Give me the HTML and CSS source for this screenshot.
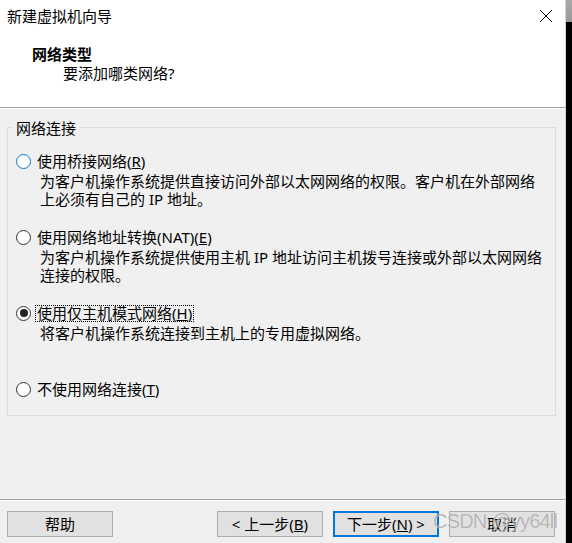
FILE: index.html
```html
<!DOCTYPE html>
<html lang="zh-CN">
<head>
<meta charset="utf-8">
<title>新建虚拟机向导</title>
<link rel="stylesheet" href="styles.css">
</head>
<body>
<div class="screen">
  <div class="window">
    <div class="header">
      <div class="titlebar">
        <span class="title">新建虚拟机向导</span>
        <svg class="close" width="14" height="14" viewBox="0 0 14 14"><path d="M1 1L13 13M13 1L1 13" stroke="#000" stroke-width="1" fill="none"/></svg>
      </div>
      <div class="heading">网络类型</div>
      <div class="subheading">要添加哪类网络?</div>
    </div>
    <div class="content">
      <fieldset class="group">
        <legend>网络连接</legend>
        <div class="option">
          <label class="opt-label"><span class="radio hover"></span><span class="opt-text">使用桥接网络(<u>R</u>)</span></label>
          <p class="desc">为客户机操作系统提供直接访问外部以太网网络的权限。客户机在外部网络<br>上必须有自己的 IP 地址。</p>
        </div>
        <div class="option">
          <label class="opt-label"><span class="radio"></span><span class="opt-text">使用网络地址转换(NAT)(<u>E</u>)</span></label>
          <p class="desc">为客户机操作系统提供使用主机 IP 地址访问主机拨号连接或外部以太网网络<br>连接的权限。</p>
        </div>
        <div class="option">
          <label class="opt-label"><span class="radio checked"></span><span class="opt-text focus">使用仅主机模式网络(<u>H</u>)</span></label>
          <p class="desc">将客户机操作系统连接到主机上的专用虚拟网络。</p>
        </div>
        <div class="option last">
          <label class="opt-label"><span class="radio"></span><span class="opt-text">不使用网络连接(<u>T</u>)</span></label>
        </div>
      </fieldset>
    </div>
    <div class="footer">
      <button class="btn help">帮助</button>
      <button class="btn">&lt; 上一步(<u>B</u>)</button>
      <button class="btn primary">下一步(<u>N</u>) &gt;</button>
      <button class="btn">取消</button>
      <span class="watermark">CSDN @yy64ll</span>
    </div>
  </div>
  <div class="edge"></div>
</div>
</body>
</html>
```

FILE: styles.css
```css
* { box-sizing: border-box; }
html, body { margin: 0; padding: 0; }
body {
  background: #000;
  font-family: "Noto Sans", "Noto Sans CJK SC", sans-serif;
  font-size: 15px;
  color: #000;
}
.screen {
  display: flex;
  width: 572px;
  height: 543px;
  overflow: hidden;
}
.window {
  width: 566px;
  height: 543px;
  border-right: 1px solid #d4d4d4;
  background: #f0f0f0;
  display: flex;
  flex-direction: column;
  position: relative;
}
.edge {
  width: 6px;
  background: linear-gradient(#a8a8a8 0, #9a9a9a 22px, #000 22px);
}

/* header */
.header {
  height: 108px;
  background: #fff;
  border-bottom: 1px solid #a0a0a0;
}
.titlebar {
  height: 32px;
  display: flex;
  align-items: center;
  justify-content: space-between;
  padding: 0 12px 0 7px;
}
.title {
  font-family: "Noto Sans CJK SC", sans-serif;
  font-size: 15px;
  line-height: 32px;
}
.close { display: block; }
.heading {
  margin-top: 12px;
  padding-left: 32px;
  font-weight: bold;
  line-height: 20px;
}
.subheading {
  padding-left: 63px;
  line-height: 19px;
}

/* content */
.content {
  height: 391px;
  border-top: 1px solid #fff;
  padding-top: 10px;
}
.group {
  margin: 0 9px 0 7px;
  padding: 14px 8px 15px 8px;
  border: 1px solid #dcdcdc;
  min-width: 0;
}
.group legend {
  padding: 0 3px;
  margin-left: -3px;
  line-height: 17px;
  font-family: "Noto Sans CJK SC", sans-serif;
}
.option { height: 76px; }
.option.last { height: auto; }
.opt-label {
  display: flex;
  align-items: center;
  height: 22px;
}
.radio {
  width: 15px;
  height: 15px;
  border: 1px solid #333;
  border-radius: 50%;
  background: #fff;
  margin-right: 6px;
  flex: none;
  display: flex;
  align-items: center;
  justify-content: center;
}
.radio.hover { border-color: #0078d7; }
.radio.checked::after {
  content: "";
  width: 8px;
  height: 8px;
  border-radius: 50%;
  background: #222;
}
.opt-text { line-height: 22px; }
.opt-text.focus {
  display: inline-block;
  line-height: 15px;
  border: 1px dotted #000;
  padding: 0 1px;
  margin-left: -2px;
}
.desc {
  margin: 0;
  padding-left: 24px;
  line-height: 18px;
  white-space: nowrap;
}

/* footer */
.footer {
  flex: 1;
  border-top: 1px solid #a0a0a0;
  box-shadow: inset 0 1px 0 #fff;
  display: flex;
  align-items: flex-start;
  gap: 10px;
  padding: 11px 10px 0 7px;
  position: relative;
}
.btn {
  width: 106px;
  height: 26px;
  background: #e1e1e1;
  border: 1px solid #adadad;
  font-family: "Noto Sans", "Noto Sans CJK SC", sans-serif;
  font-size: 15px;
  line-height: 22px;
  color: #000;
  padding: 0;
}
.btn.help { margin-right: auto; }
.btn.primary { border: 2px solid #0078d7; }
.watermark {
  position: absolute;
  left: 433px;
  top: 8px;
  font-family: "Liberation Sans", sans-serif;
  font-size: 20px;
  letter-spacing: -0.8px;
  line-height: 26px;
  color: rgba(140, 140, 140, 0.6);
  text-shadow: 0 0 1px rgba(255,255,255,0.7);
  pointer-events: none;
  white-space: nowrap;
}
```
